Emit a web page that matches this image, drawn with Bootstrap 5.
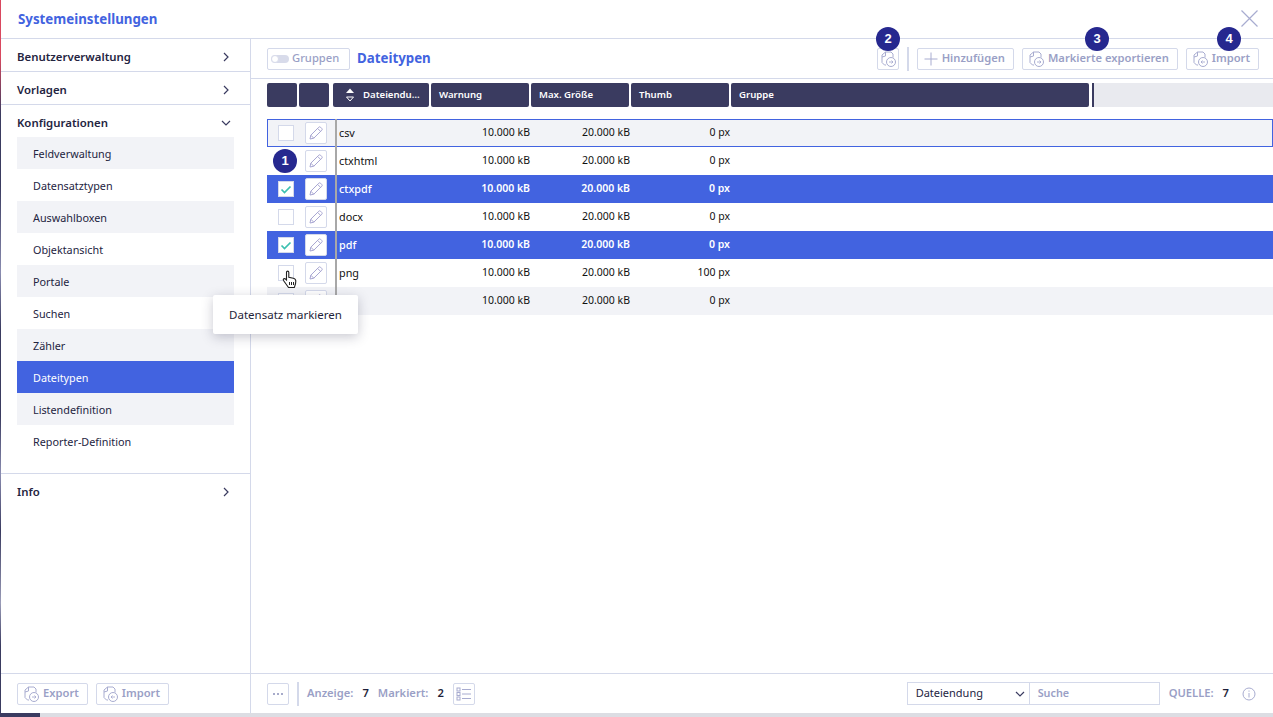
<!DOCTYPE html>
<html lang="de"><head><meta charset="utf-8"><title>Systemeinstellungen</title>
<link href="https://cdn.jsdelivr.net/npm/bootstrap@5.3.0/dist/css/bootstrap.min.css" rel="stylesheet">
<style>
html,body{height:100%;overflow:hidden}
body{font-family:"Noto Sans",sans-serif;font-size:11.5px;color:#1f1f3a;background:#fff}
.shell{width:1273px;height:717px;position:relative;display:flex;flex-direction:column;overflow:hidden;border-left:1px solid;border-image:linear-gradient(#d9485f 0,#d9485f 8%,#3a3b60 16%,#3a3b60 26%,#8a8cb0 38%,#3a3b60 46%,#3a3b60 58%,#8a8cb0 66%,#3a3b60 74%,#9a9cb8 84%,#3a3b60 90%) 1}
.titlebar{height:39px;flex:none;border-bottom:1px solid #d4d9ea;display:flex;align-items:center;padding:2px 0 0 17px;font-weight:700;font-size:13.3px;color:#4263e0}
.closer{position:absolute;left:1239px;top:10px}
.mainarea{flex:1;display:flex;min-height:0}
.sidebar{width:250px;flex:none;border-right:1px solid #d4d9ea;display:flex;flex-direction:column}
.grp{height:33px;display:flex;align-items:center;justify-content:space-between;padding:4px 19px 0 16px;font-weight:600;font-size:11.4px;border-bottom:1px solid #d4d9ea;color:#24243f}
.grp.open{border-bottom:0;height:32px}
.sublist{padding:0 16px 16px 16px;border-bottom:1px solid #d4d9ea}
.sub{height:32px;display:flex;align-items:center;padding:2px 0 0 16px;font-size:10.8px;color:#24243f}
.sub.alt{background:#f2f3f7}
.sub.cur{background:#4263e0;color:#fff}
.grp.plain{border-bottom:0;padding-top:2px}
.side-foot{margin-top:auto;height:44px;border-top:1px solid #d4d9ea;display:flex;align-items:center;gap:8px;padding:0 0 4px 16px;flex:none}
.tbtn{height:22px;border:1px solid #d4d9ea;border-radius:2px;background:#fff;display:inline-flex;align-items:center;gap:3px;padding:0 8px 0 4px;font-weight:600;font-size:11.2px;color:#9a9fc6;white-space:nowrap}
.square{width:22px;padding:0;justify-content:center}
.plusbtn{gap:2px}
.gruppen{width:83px;font-weight:500}
.content{flex:1;min-width:0;display:flex;flex-direction:column;position:relative}
.toolbar{height:40px;flex:none;border-bottom:1px solid #d4d9ea;display:flex;align-items:center;padding:0 14px 0 16px}
.pagehead{font-weight:700;font-size:13.3px;color:#4263e0;margin-left:7px}
.switchy{width:18px;height:8px;border-radius:4px;background:#d8dbea;position:relative;margin:0 0 0 -1px}
.switchy::before{content:"";position:absolute;left:0;top:0;width:8px;height:8px;border-radius:50%;background:#fff;border:1px solid #d8dbea}
.vsep{width:2px;height:24px;background:#d4d9ea;margin:0 8px}
.headrow{display:flex;height:24px;margin:4px 0 0 16px;flex:none}
.hc{height:24px;background:#3a3b60;color:#fff;font-size:9.6px;font-weight:600;display:flex;align-items:center;padding-left:8px;border-radius:2px;margin-right:2px}
.hc1{width:30px}
.hc2{width:96px;padding-left:12px;margin-left:2px;gap:8px}
.hc3{width:98px}
.hc4{width:358px;margin-right:0}
.hfill{flex:1;background:#e9eaef;border-left:2px solid #3a3b60;margin-left:3px}
.rows{margin:12px 0 0 16px;position:relative}
.drow{height:28px;display:flex;align-items:center;font-size:10.8px;color:#111}
.drow.alt{background:#f2f3f7}
.drow.sel{background:#4263e0;color:#fff;font-weight:600}
.drow.sel .namec{font-weight:500}
.drow.focus{box-shadow:inset 0 0 0 1px #4263e0}
.cbcell{width:38px;flex:none;display:flex;justify-content:center}
.cb{width:16px;height:16px;border:1px solid #d4d9ea;background:#fff;display:flex;align-items:center;justify-content:center}
.penbox{width:22px;height:22px;border:1px solid #d4d9ea;background:#fff;border-radius:2px;display:flex;align-items:center;justify-content:center;flex:none}
.namec{width:108px;padding-left:12px;flex:none}
.num{width:100px;text-align:right;flex:none;font-size:10.5px}
.num.num1{width:95px}
.rule{position:absolute;left:68px;top:0;height:196px;width:2px;background:#a8a8a8}
.foot{height:44px;flex:none;border-top:1px solid #d4d9ea;display:flex;align-items:center;padding:0 17px 4px 16px;font-weight:600;font-size:11.2px;color:#9a9fc6}
.val{color:#1f1f3a;margin:0 9px}
.selbox{width:123px;height:23px;border:1px solid #d4d9ea;display:flex;align-items:center;justify-content:space-between;padding:0 4px 0 8px;font-weight:400;font-size:11px;color:#24243f}
.searchbox{width:130px;height:23px;border:1px solid #d4d9ea;border-left:0;display:flex;align-items:center;padding-left:8px;font-size:10.8px;margin-right:9px}
.tip{position:absolute;left:212px;top:295px;width:145px;height:39px;background:#fff;border-radius:2px;box-shadow:0 3px 12px rgba(40,40,70,.25);display:flex;align-items:center;justify-content:center;font-size:11.5px;color:#1f1f3a}
.bub{position:absolute;width:24px;height:24px;border-radius:50%;background:#26288f;color:#fff;font-weight:700;font-size:13px;display:flex;align-items:center;justify-content:center;font-family:"Liberation Sans",sans-serif}
.bub1{left:272px;top:149px}
.bub2{left:875px;top:27px}
.bub3{left:1084px;top:27px}
.bub4{left:1216px;top:27px}
.handy{position:absolute;left:281px;top:270px}
.bottombar{position:absolute;left:-1px;right:0;bottom:0;height:4px;background:#dcdde3}
.bottombar::before{content:"";display:block;width:40px;height:4px;background:#3a3b60}
</style></head><body>
<svg width="0" height="0" class="d-block"><defs>
<symbol id="fexp" viewBox="0 0 18 18"><path d="M6.500 2H12l2 2v3.500M6.500 2 3 5v7.500L5.500 15H7M6.500 2v4L3 7" fill="none" stroke="#a8acd0" stroke-width="1"/><circle cx="12" cy="12" r="4.500" fill="#fff" stroke="#a8acd0"/><path d="M10 12h4M12.500 10.500 14 12l-1.500 1.500" fill="none" stroke="#a8acd0" stroke-width=".9"/></symbol>
<symbol id="fimp" viewBox="0 0 18 18"><path d="M6.500 2H12l2 2v3.500M6.500 2 3 5v7.500L5.500 15H7M6.500 2v4L3 7" fill="none" stroke="#a8acd0" stroke-width="1"/><circle cx="12" cy="12" r="4.500" fill="#fff" stroke="#a8acd0"/><path d="M14 12h-4M11.500 10.500 10 12l1.500 1.500" fill="none" stroke="#a8acd0" stroke-width=".9"/></symbol>
<symbol id="pen" viewBox="0 0 16 16"><path d="M2 14 2.800 10.200 10.800 2.200a1.200 1.200 0 0 1 1.700 0l1.300 1.300a1.200 1.200 0 0 1 0 1.700L5.800 13.200zM9.600 3.400l3 3M2.800 10.200l3 3" fill="none" stroke="#a8a6d2" stroke-width="1"/></symbol>
<symbol id="chk" viewBox="0 0 12 12"><path d="M1.500 6.500 4.500 9.500 10.500 3.500" fill="none" stroke="#3cc0b0" stroke-width="1.700"/></symbol>
<symbol id="chr" viewBox="0 0 10 10"><path d="M3 1l4 4-4 4" fill="none" stroke="#3a3b60" stroke-width="1.200"/></symbol>
<symbol id="chd" viewBox="0 0 10 10"><path d="M1 3l4 4 4-4" fill="none" stroke="#3a3b60" stroke-width="1.200"/></symbol>
</defs></svg>
<div class="shell">
<header class="titlebar">Systemeinstellungen</header>
<svg class="closer" width="19" height="17" viewBox="0 0 19 17"><path d="M1.500 .5 17.500 16.500M17.500 .5 1.500 16.500" stroke="#a8acd0" stroke-width="1.200" fill="none"/></svg>
<div class="mainarea">
<aside class="sidebar">
<div class="grp">Benutzerverwaltung<svg width="10" height="10"><use href="#chr"/></svg></div>
<div class="grp">Vorlagen<svg width="10" height="10"><use href="#chr"/></svg></div>
<div class="grp open">Konfigurationen<svg width="10" height="10"><use href="#chd"/></svg></div>
<div class="sublist">
<div class="sub alt">Feldverwaltung</div><div class="sub">Datensatztypen</div><div class="sub alt">Auswahlboxen</div><div class="sub">Objektansicht</div><div class="sub alt">Portale</div><div class="sub">Suchen</div><div class="sub alt">Zähler</div><div class="sub cur">Dateitypen</div><div class="sub alt">Listendefinition</div><div class="sub">Reporter-Definition</div>
</div>
<div class="grp plain">Info<svg width="10" height="10"><use href="#chr"/></svg></div>
<div class="side-foot">
<span class="tbtn"><svg width="18" height="18"><use href="#fexp"/></svg>Export</span>
<span class="tbtn"><svg width="18" height="18"><use href="#fimp"/></svg>Import</span>
</div>
</aside>
<main class="content">
<div class="toolbar">
<span class="tbtn gruppen"><span class="switchy"></span>Gruppen</span>
<span class="pagehead">Dateitypen</span>
<span class="ms-auto tbtn square"><svg width="18" height="18"><use href="#fexp"/></svg></span>
<span class="vsep"></span>
<span class="tbtn plusbtn"><svg width="18" height="18" viewBox="0 0 18 18"><path d="M9 2.500v13M2.500 9h13" stroke="#a8acd0" fill="none"/></svg>Hinzufügen</span>
<span class="tbtn ms-2"><svg width="18" height="18"><use href="#fexp"/></svg>Markierte exportieren</span>
<span class="tbtn ms-2"><svg width="18" height="18"><use href="#fimp"/></svg>Import</span>
</div>
<div class="headrow">
<div class="hc hc1"></div><div class="hc hc1"></div>
<div class="hc hc2"><svg width="10" height="16" viewBox="0 0 10 16"><path d="M5 1.500 9 6H1z" fill="#fff"/><path d="M1.500 10h7L5 14z" fill="none" stroke="#fff"/></svg>Dateiendu…</div>
<div class="hc hc3">Warnung</div><div class="hc hc3">Max. Größe</div><div class="hc hc3">Thumb</div><div class="hc hc4">Gruppe</div>
<div class="hfill"></div>
</div>
<div class="rows">
<div class="drow alt focus"><div class="cbcell"><span class="cb"></span></div><span class="penbox"><svg width="16" height="16"><use href="#pen"/></svg></span><span class="namec">csv</span><span class="num num1">10.000 kB</span><span class="num">20.000 kB</span><span class="num">0 px</span></div>
<div class="drow"><div class="cbcell"></div><span class="penbox"><svg width="16" height="16"><use href="#pen"/></svg></span><span class="namec">ctxhtml</span><span class="num num1">10.000 kB</span><span class="num">20.000 kB</span><span class="num">0 px</span></div>
<div class="drow sel"><div class="cbcell"><span class="cb"><svg width="12" height="12"><use href="#chk"/></svg></span></div><span class="penbox"><svg width="16" height="16"><use href="#pen"/></svg></span><span class="namec">ctxpdf</span><span class="num num1">10.000 kB</span><span class="num">20.000 kB</span><span class="num">0 px</span></div>
<div class="drow"><div class="cbcell"><span class="cb"></span></div><span class="penbox"><svg width="16" height="16"><use href="#pen"/></svg></span><span class="namec">docx</span><span class="num num1">10.000 kB</span><span class="num">20.000 kB</span><span class="num">0 px</span></div>
<div class="drow sel"><div class="cbcell"><span class="cb"><svg width="12" height="12"><use href="#chk"/></svg></span></div><span class="penbox"><svg width="16" height="16"><use href="#pen"/></svg></span><span class="namec">pdf</span><span class="num num1">10.000 kB</span><span class="num">20.000 kB</span><span class="num">0 px</span></div>
<div class="drow"><div class="cbcell"><span class="cb"></span></div><span class="penbox"><svg width="16" height="16"><use href="#pen"/></svg></span><span class="namec">png</span><span class="num num1">10.000 kB</span><span class="num">20.000 kB</span><span class="num">100 px</span></div>
<div class="drow alt"><div class="cbcell"><span class="cb"></span></div><span class="penbox"><svg width="16" height="16"><use href="#pen"/></svg></span><span class="namec"></span><span class="num num1">10.000 kB</span><span class="num">20.000 kB</span><span class="num">0 px</span></div>
<span class="rule"></span>
</div>
<div class="foot mt-auto">
<span class="tbtn square"><svg width="12" height="4" viewBox="0 0 12 4"><circle cx="2" cy="2" r="1" fill="#8a8fb8"/><circle cx="6" cy="2" r="1" fill="#8a8fb8"/><circle cx="10" cy="2" r="1" fill="#8a8fb8"/></svg></span>
<span class="vsep"></span>
<span>Anzeige:</span><span class="val">7</span><span>Markiert:</span><span class="val">2</span>
<span class="tbtn square"><svg width="16" height="14" viewBox="0 0 16 14" fill="none" stroke="#a8acd0"><rect x="1" y="1" width="3" height="3"/><rect x="1" y="5.500" width="3" height="3"/><rect x="1" y="10" width="3" height="3"/><path d="M6 2.500h9M6 7h9M6 11.500h9"/></svg></span>
<span class="selbox ms-auto">Dateiendung<svg width="10" height="10"><use href="#chd"/></svg></span>
<span class="searchbox">Suche</span>
<span>QUELLE:</span><span class="val">7</span>
<svg class="ms-1" width="14" height="14" viewBox="0 0 14 14" fill="none" stroke="#a8acd0"><circle cx="7" cy="7" r="6"/><path d="M7 6v4.500M7 3.500v1.200"/></svg>
</div>
</main>
</div>
<span class="bub bub1">1</span>
<span class="bub bub2">2</span>
<span class="bub bub3">3</span>
<span class="bub bub4">4</span>
<svg class="handy" width="16" height="19" viewBox="0 0 16 19"><path d="M4.500 2.200c0-1.500 2.300-1.500 2.300 0v5l4.500 1c1.500.4 2.500 1.200 2.500 2.800 0 3-.6 4-1.500 6.500H6.500L1.500 10.500c-.8-1.500.8-2.500 2-1.500l1 1z" fill="#fff" stroke="#222" stroke-width="1.100"/><path d="M7.500 12v3M9.500 12v3M11.500 12v3" stroke="#222" fill="none"/></svg>
<div class="tip">Datensatz markieren</div>
<div class="bottombar"></div>
</div>
<script src="https://cdn.jsdelivr.net/npm/bootstrap@5.3.0/dist/js/bootstrap.bundle.min.js"></script>
</body></html>
